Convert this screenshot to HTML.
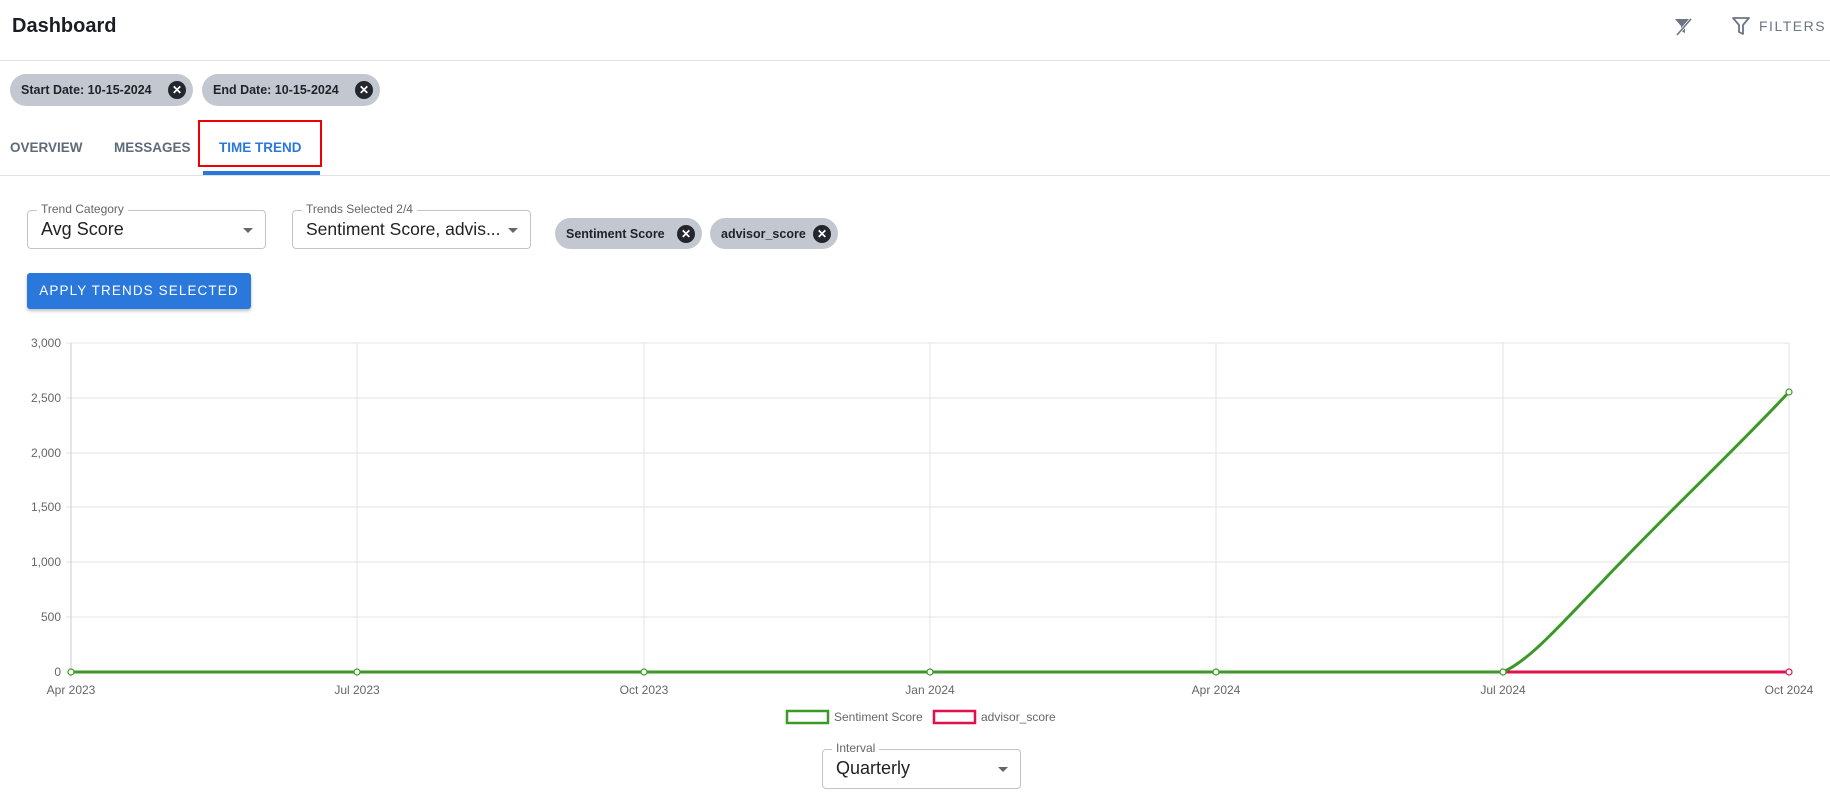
<!DOCTYPE html>
<html><head><meta charset="utf-8"><style>
*{box-sizing:border-box;margin:0;padding:0}
body{width:1830px;height:810px;background:#fff;font-family:"Liberation Sans",sans-serif;position:relative;overflow:hidden;color:#1b1f24}
.a{position:absolute}
.chip{position:absolute;background:#c3c8d0;border-radius:16px;font-size:12.5px;font-weight:bold;color:#1f2328;display:flex;align-items:center;padding-left:11px}
.x{position:absolute;right:7px;top:50%;margin-top:-9px;width:18px;height:18px;border-radius:50%;background:#23272d;color:#fff;font-size:12px;line-height:18px;text-align:center;font-weight:bold}
.tab{position:absolute;top:140px;font-size:13.5px;font-weight:bold;color:#5f6b7a}
.sel{position:absolute;border:1px solid #c4c4c4;border-radius:4px}
.sel .lb{position:absolute;top:-9px;left:9px;background:#fff;padding:0 4px;font-size:12px;color:#666}
.sel .v{position:absolute;left:13px;top:8px;font-size:18px;color:#222}
.sel .ar{position:absolute;right:12px;top:17px;border-left:5px solid transparent;border-right:5px solid transparent;border-top:5px solid #666}
</style></head><body>
<div class="a" style="left:12px;top:15px;font-size:20px;font-weight:bold">Dashboard</div>
<svg class="a" style="left:1672px;top:15px" width="22" height="22" viewBox="0 0 22 22"><path d="M3 4h16l-6 7v7l-4-2v-5z" fill="#6b7583"/><path d="M5 20L19 4" stroke="#fff" stroke-width="3"/><path d="M5 20L19 4" stroke="#6b7583" stroke-width="1.6"/></svg>
<svg class="a" style="left:1731px;top:15px" width="20" height="22" viewBox="0 0 20 22"><path d="M2 3h16l-6 7v9l-4-2v-7z" fill="none" stroke="#6b7583" stroke-width="1.8" stroke-linejoin="round"/></svg>
<div class="a" style="left:1759px;top:18px;font-size:14px;letter-spacing:1.5px;color:#6b7583">FILTERS</div>
<div class="a" style="left:0;top:60px;width:1830px;height:1px;background:#e0e0e0"></div>
<div class="chip" style="left:10px;top:74px;width:183px;height:32px">Start Date: 10-15-2024<span class="x">✕</span></div>
<div class="chip" style="left:202px;top:74px;width:178px;height:32px">End Date: 10-15-2024<span class="x">✕</span></div>
<div class="tab" style="left:10px">OVERVIEW</div>
<div class="tab" style="left:114px">MESSAGES</div>
<div class="tab" style="left:219px;color:#2a78dc">TIME TREND</div>
<div class="a" style="left:198px;top:120px;width:124px;height:47px;border:2px solid #e00"></div>
<div class="a" style="left:203px;top:171px;width:117px;height:4px;background:#2a78dc"></div>
<div class="a" style="left:0;top:175px;width:1830px;height:1px;background:#e0e0e0"></div>
<div class="sel" style="left:27px;top:210px;width:239px;height:39px"><span class="lb">Trend Category</span><span class="v">Avg Score</span><span class="ar"></span></div>
<div class="sel" style="left:292px;top:210px;width:239px;height:39px"><span class="lb">Trends Selected 2/4</span><span class="v" style="font-size:17.5px">Sentiment Score, advis...</span><span class="ar"></span></div>
<div class="chip" style="left:555px;top:218px;width:147px;height:31px">Sentiment Score<span class="x">✕</span></div>
<div class="chip" style="left:710px;top:218px;width:128px;height:31px">advisor_score<span class="x">✕</span></div>
<div class="a" style="left:27px;top:273px;width:224px;height:36px;background:#2a78dc;border-radius:3px;box-shadow:0 2px 3px rgba(0,0,0,.25);color:#fff;font-size:13.5px;letter-spacing:1.1px;text-align:center;line-height:36px">APPLY TRENDS SELECTED</div>
<svg class="a" style="left:0;top:330px" width="1830" height="400" viewBox="0 330 1830 400" font-family="Liberation Sans" font-size="12" fill="#666">
<g stroke="#e3e3e3" stroke-width="1">
<line x1="66" y1="343" x2="1789" y2="343"/><line x1="66" y1="398" x2="1789" y2="398"/><line x1="66" y1="453" x2="1789" y2="453"/><line x1="66" y1="507" x2="1789" y2="507"/><line x1="66" y1="562" x2="1789" y2="562"/><line x1="66" y1="617" x2="1789" y2="617"/><line x1="66" y1="672" x2="1789" y2="672"/>
<line x1="357" y1="343" x2="357" y2="677"/><line x1="644" y1="343" x2="644" y2="677"/><line x1="930" y1="343" x2="930" y2="677"/><line x1="1216" y1="343" x2="1216" y2="677"/><line x1="1503" y1="343" x2="1503" y2="677"/><line x1="1789" y1="343" x2="1789" y2="677"/>
</g>
<line x1="71" y1="343" x2="71" y2="677" stroke="#ccc"/>
<g text-anchor="end"><text x="61" y="347">3,000</text><text x="61" y="402">2,500</text><text x="61" y="457">2,000</text><text x="61" y="511">1,500</text><text x="61" y="566">1,000</text><text x="61" y="621">500</text><text x="61" y="676">0</text></g>
<g text-anchor="middle"><text x="71" y="694">Apr 2023</text><text x="357" y="694">Jul 2023</text><text x="644" y="694">Oct 2023</text><text x="930" y="694">Jan 2024</text><text x="1216" y="694">Apr 2024</text><text x="1503" y="694">Jul 2024</text><text x="1789" y="694">Oct 2024</text></g>
<line x1="1503" y1="672" x2="1789" y2="672" stroke="#e0104a" stroke-width="3"/>
<path d="M71 672H1503C1530 660 1560 625 1600 584C1660 520 1730 455 1789 392" fill="none" stroke="#3b9a27" stroke-width="3"/>
<g fill="#fff" stroke="#3b9a27" stroke-width="1.2"><circle cx="71" cy="672" r="3"/><circle cx="357" cy="672" r="3"/><circle cx="644" cy="672" r="3"/><circle cx="930" cy="672" r="3"/><circle cx="1216" cy="672" r="3"/><circle cx="1503" cy="672" r="3"/><circle cx="1789" cy="392" r="3"/></g>
<circle cx="1789" cy="672" r="3" fill="#fff" stroke="#e0104a" stroke-width="1.2"/>
<rect x="787" y="711" width="41" height="12" fill="none" stroke="#3b9a27" stroke-width="2.5"/>
<text x="834" y="721">Sentiment Score</text>
<rect x="934" y="711" width="41" height="12" fill="none" stroke="#e0104a" stroke-width="2.5"/>
<text x="981" y="721">advisor_score</text>
</svg>
<div class="sel" style="left:822px;top:749px;width:199px;height:40px"><span class="lb">Interval</span><span class="v">Quarterly</span><span class="ar"></span></div>
</body></html>
